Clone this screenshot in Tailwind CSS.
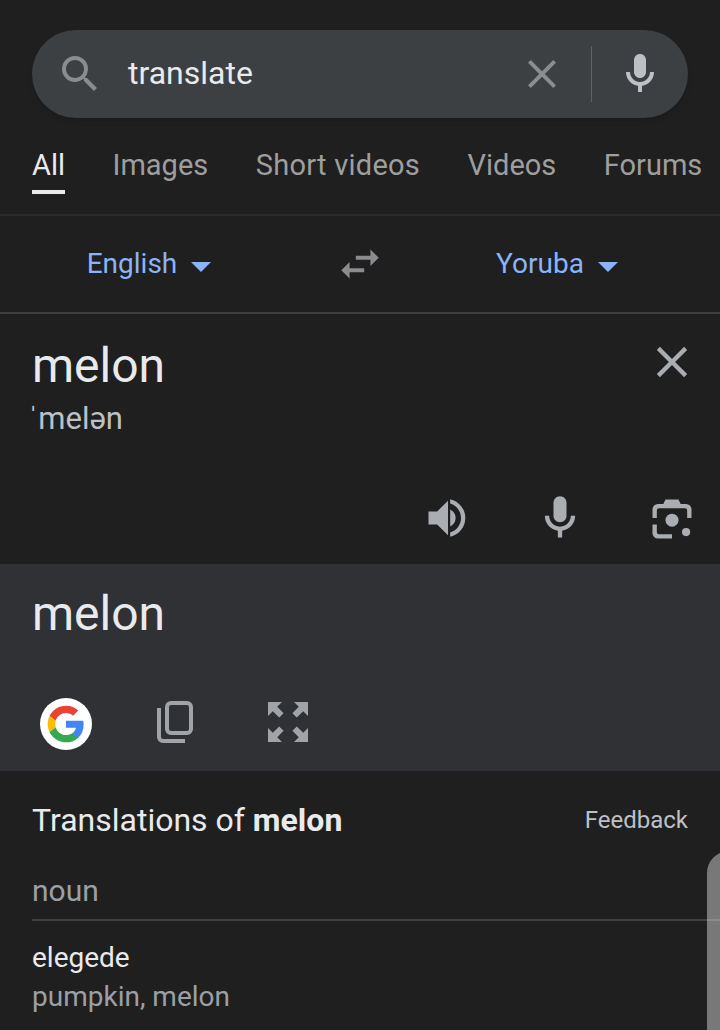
<!DOCTYPE html>
<html lang="en">
<head>
  <meta charset="UTF-8" />
  <title>translate</title>
  <script src="https://cdn.jsdelivr.net/npm/@tailwindcss/browser@4"></script>
</head>
<body class="bg-[#1f1f1f] font-['Roboto',sans-serif]">
  <div class="relative w-[720px] h-[1030px] overflow-hidden">
    <!-- search -->
    <div class="pt-[30px] px-8">
      <div class="h-[88px] rounded-[44px] bg-[#3c4043] flex items-center shadow-md">
        <svg class="ml-[24px] w-[48px] h-[48px] text-[#8a8c8f]" viewBox="0 0 24 24" fill="currentColor"><path d="M15.5 14h-.79l-.28-.27A6.47 6.47 0 0 0 16 9.5 6.5 6.5 0 1 0 9.5 16c1.61 0 3.09-.59 4.23-1.57l.27.28v.79l5 4.99L20.49 19l-4.99-5zm-6 0C7.01 14 5 11.99 5 9.5S7.01 5 9.5 5 14 7.01 14 9.5 11.99 14 9.5 14z"/></svg>
        <span class="ml-[24px] -mt-[2px] text-[32px] text-[#e8eaed] flex-1">translate</span>
        <svg class="w-[48px] h-[48px] text-[#8a8c8f]" viewBox="0 0 24 24" fill="currentColor"><path d="M19 6.41 17.59 5 12 10.59 6.41 5 5 6.41 10.59 12 5 17.59 6.41 19 12 13.41 17.59 19 19 17.59 13.41 12z"/></svg>
        <div class="ml-[25px] w-px h-[56px] bg-[#5f6368]"></div>
        <svg class="ml-[24px] mr-[24px] w-[48px] h-[48px] text-[#bdc1c6]" viewBox="0 0 24 24" fill="currentColor"><path d="M12 14c1.66 0 3-1.34 3-3V5c0-1.66-1.34-3-3-3S9 3.34 9 5v6c0 1.66 1.34 3 3 3z"/><path d="M17 11c0 2.76-2.24 5-5 5s-5-2.24-5-5H5c0 3.53 2.61 6.43 6 6.92V21h2v-3.08c3.39-.49 6-3.39 6-6.92h-2z"/></svg>
      </div>
    </div>
    <!-- tabs -->
    <div class="h-[98px] border-b-2 border-[#2a2b2c] flex pl-8 gap-[47.5px] text-[29px] text-[#9e9e9e] whitespace-nowrap">
      <div class="h-[76px] pt-[27px] border-b-4 border-[#e8eaed] text-[#e8eaed] leading-[40px]">All</div>
      <div class="pt-[27px] leading-[40px]">Images</div>
      <div class="pt-[27px] leading-[40px] tracking-[0.25px]">Short videos</div>
      <div class="pt-[27px] leading-[40px]">Videos</div>
      <div class="pt-[27px] leading-[40px]">Forums</div>
    </div>
    <!-- languages -->
    <div class="h-[98px] border-b-2 border-[#3c4043] grid grid-cols-[298px_124px_270px] items-center text-[28px] text-[#8ab4f8]">
      <div class="flex items-center justify-center gap-[14px]">
        <span>English</span>
        <div class="mt-[6px] border-x-[10px] border-x-transparent border-t-[10px] border-t-[#8ab4f8]"></div>
      </div>
      <svg class="mx-auto w-[50px] h-[50px] text-[#8a8c8f]" viewBox="0 0 24 24" fill="currentColor"><path d="M6.99 11 3 15l3.99 4v-3H14v-2H6.99v-3zM21 9l-3.99-4v3H10v2h7.01v3L21 9z"/></svg>
      <div class="flex items-center justify-center gap-[14px]">
        <span>Yoruba</span>
        <div class="mt-[6px] border-x-[10px] border-x-transparent border-t-[10px] border-t-[#8ab4f8]"></div>
      </div>
    </div>
    <!-- source -->
    <div class="relative h-[250px] pl-8 pt-[20px]">
      <div class="text-[48px] leading-[64px] text-[#e8eaed]">melon</div>
      <div class="text-[31px] leading-[40px] mt-[1px] text-[#bdc1c6]"><span class="font-['Liberation_Sans'] -ml-[4px]">ˈ</span>melən</div>
      <svg class="absolute right-[22px] top-[22px] w-[52px] h-[52px] text-[#aaaeb3]" viewBox="0 0 24 24" fill="currentColor"><path d="M19 6.41 17.59 5 12 10.59 6.41 5 5 6.41 10.59 12 5 17.59 6.41 19 12 13.41 17.59 19 19 17.59 13.41 12z"/></svg>
      <div class="absolute right-[22px] bottom-[20px] flex gap-[60px] text-[#aaaeb3]">
        <svg class="w-[52px] h-[52px]" viewBox="0 0 24 24" fill="currentColor"><path d="M3 9v6h4l5 5V4L7 9H3z"/><path d="M13 8.1v7.8c1.5-.7 2.5-2.2 2.5-3.9S14.5 8.8 13 8.1z"/><path d="M13 3.3v2c2.9.9 5 3.5 5 6.7s-2.1 5.8-5 6.7v2c4-.9 7-4.5 7-8.7s-3-7.8-7-8.7z"/></svg>
        <svg class="w-[52px] h-[52px]" viewBox="0 0 24 24" fill="currentColor"><path d="M12 14c1.66 0 3-1.34 3-3V5c0-1.66-1.34-3-3-3S9 3.34 9 5v6c0 1.66 1.34 3 3 3z"/><path d="M17 11c0 2.76-2.24 5-5 5s-5-2.24-5-5H5c0 3.53 2.61 6.43 6 6.92V21h2v-3.08c3.39-.49 6-3.39 6-6.92h-2z"/></svg>
        <svg class="w-[52px] h-[52px]" viewBox="0 0 24 24" fill="currentColor"><circle cx="12" cy="13" r="3"/><circle cx="18.5" cy="18.5" r="1.9"/><path d="M9 3.5h6L16 5.5h2.5A2.5 2.5 0 0 1 21 8v4h-2V8.5a1 1 0 0 0-1-1H6a1 1 0 0 0-1 1V12H3V8a2.5 2.5 0 0 1 2.5-2.5H8L9 3.5z"/><path d="M3 15h2v3.5a1 1 0 0 0 1 1h6v2H5.5A2.5 2.5 0 0 1 3 19v-4z"/></svg>
      </div>
    </div>
    <!-- target -->
    <div class="h-[207px] bg-[#303134] pl-8 pt-[18px]">
      <div class="text-[48px] leading-[64px] text-[#e8eaed]">melon</div>
      <div class="mt-[52px] flex items-start">
        <div class="ml-2 w-[52px] h-[52px] rounded-full bg-white flex items-center justify-center">
          <svg class="w-[40px] h-[40px]" viewBox="0 0 24 24"><path fill="#4285F4" d="M22.56 12.25c0-.78-.07-1.53-.2-2.25H12v4.26h5.92c-.26 1.37-1.04 2.53-2.21 3.31v2.77h3.57c2.08-1.92 3.28-4.74 3.28-8.09z"/><path fill="#34A853" d="M12 23c2.97 0 5.46-.98 7.28-2.66l-3.57-2.77c-.98.66-2.23 1.06-3.71 1.06-2.86 0-5.29-1.93-6.16-4.53H2.18v2.84C3.99 20.53 7.7 23 12 23z"/><path fill="#FBBC05" d="M5.84 14.09c-.22-.66-.35-1.36-.35-2.09s.13-1.43.35-2.09V7.07H2.18C1.43 8.55 1 10.22 1 12s.43 3.45 1.18 4.93l3.66-2.84z"/><path fill="#EA4335" d="M12 5.38c1.62 0 3.06.56 4.21 1.64l3.15-3.15C17.45 2.09 14.97 1 12 1 7.7 1 3.99 3.47 2.18 7.07l3.66 2.84c.87-2.6 3.3-4.53 6.16-4.53z"/></svg>
        </div>
        <svg class="ml-[60px] w-[48px] h-[48px] text-[#a0a3a8]" viewBox="0 0 24 24" fill="none" stroke="currentColor" stroke-width="2"><rect x="7.5" y="2.5" width="12" height="15" rx="2"/><path d="M3.5 5v14.5a2 2 0 0 0 2 2H16.5"/></svg>
        <svg class="ml-[64px] w-[48px] h-[48px] text-[#a0a3a8]" viewBox="0 0 24 24" fill="currentColor"><path d="M2 2h7L6.6 4.4l3.2 3.2-2.2 2.2-3.2-3.2L2 9zM22 2v7l-2.4-2.4-3.2 3.2-2.2-2.2 3.2-3.2L15 2zM2 22v-7l2.4 2.4 3.2-3.2 2.2 2.2-3.2 3.2L9 22zM22 22h-7l2.4-2.4-3.2-3.2 2.2-2.2 3.2 3.2L22 15z"/></svg>
      </div>
    </div>
    <!-- translations -->
    <div class="pl-8">
      <div class="flex items-center justify-between pr-8 h-[97px]">
        <div class="text-[32px] text-[#e8eaed]">Translations of <b class="font-bold">melon</b></div>
        <div class="text-[24px] text-[#bdc1c6]">Feedback</div>
      </div>
      <div class="relative z-10 h-[53px] border-b-2 border-white/15 text-[30px] leading-[46px] text-[#9aa0a6]">noun</div>
      <div class="mt-[17px] text-[28px] leading-[40px] text-[#e8eaed]">elegede</div>
      <div class="text-[28px] leading-[38px] text-[#9aa0a6]">pumpkin, melon</div>
    </div>
    <!-- page scrim peeking in from the right -->
    <div class="absolute left-[707px] top-[851px] w-[30px] h-[200px] rounded-tl-[22px] bg-[#787878]"></div>
  </div>
</body>
</html>
